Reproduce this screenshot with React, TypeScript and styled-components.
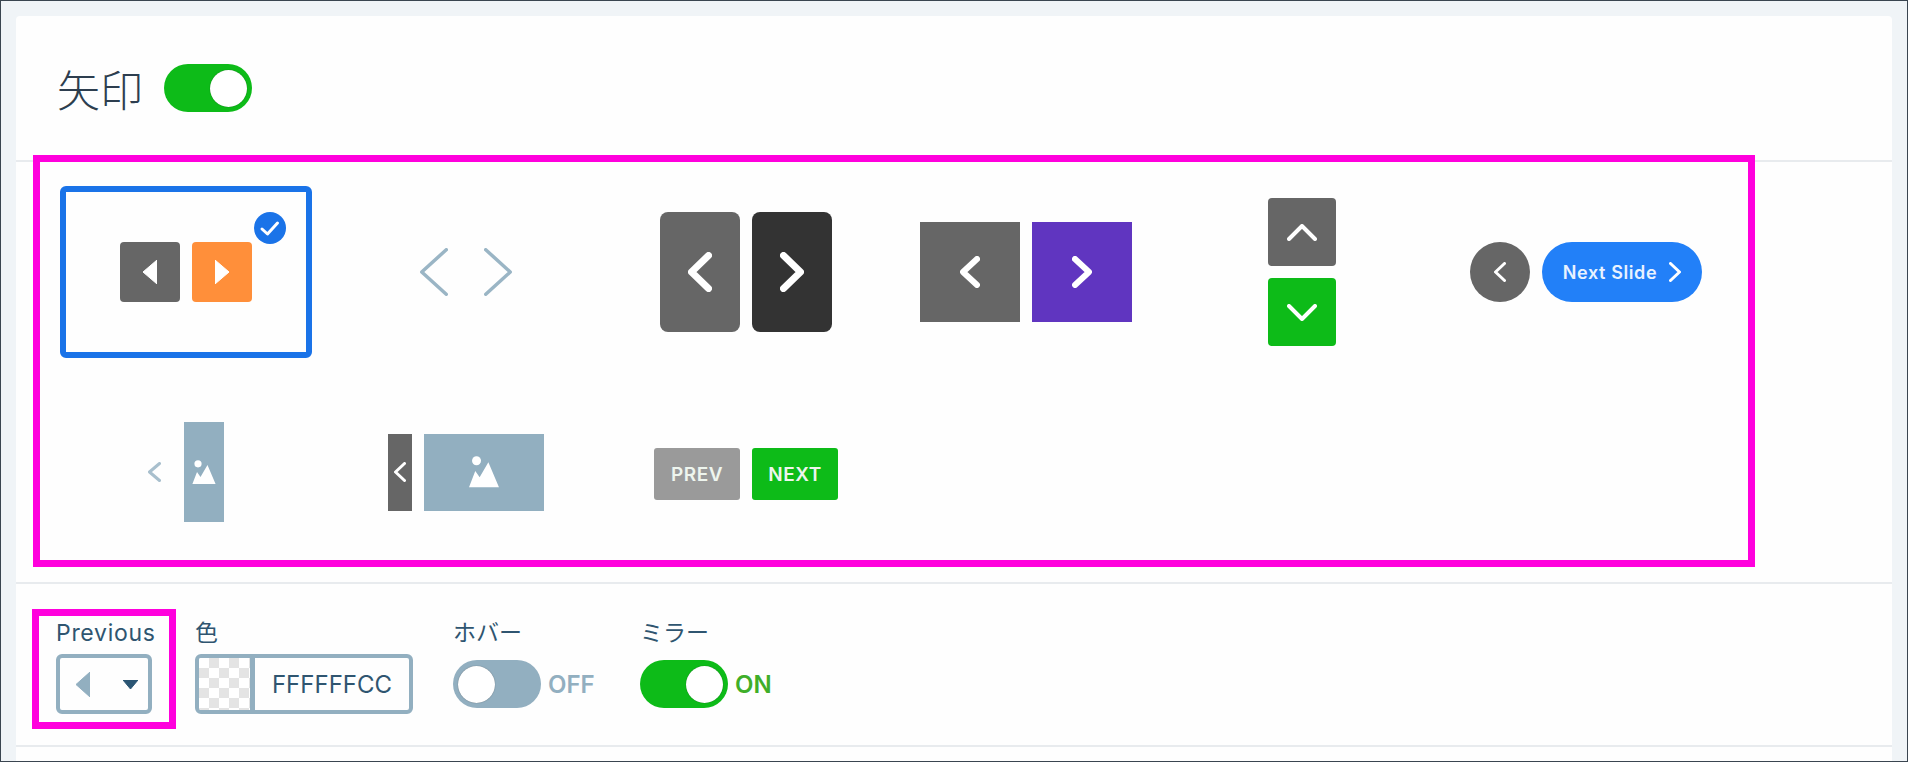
import React from "react";
import styled, { createGlobalStyle } from "styled-components";

const GlobalStyle = createGlobalStyle`
    html, body {
        margin: 0;
        padding: 0;
        background: #f0f4f7;
    }
    * {
        box-sizing: border-box;
    }
`;

const Chevron = ({ dir, w, h, s, color = "#fff" }: { dir: "left" | "right" | "up" | "down"; w: number; h: number; s: number; color?: string }) => {
    const i = s / 2;
    const points = {
        left: `${w - i},${i} ${i},${h / 2} ${w - i},${h - i}`,
        right: `${i},${i} ${w - i},${h / 2} ${i},${h - i}`,
        up: `${i},${h - i} ${w / 2},${i} ${w - i},${h - i}`,
        down: `${i},${i} ${w / 2},${h - i} ${w - i},${i}`,
    }[dir];
    return (
        <svg width={w} height={h} viewBox={`0 0 ${w} ${h}`}>
            <polyline points={points} fill="none" stroke={color} strokeWidth={s} strokeLinecap="round" strokeLinejoin="round" />
        </svg>
    );
};

const Triangle = ({ dir, w, h, color }: { dir: "left" | "right" | "down"; w: number; h: number; color: string }) => {
    const points = {
        left: `${w},0 0,${h / 2} ${w},${h}`,
        right: `0,0 ${w},${h / 2} 0,${h}`,
        down: `0,0 ${w},0 ${w / 2},${h}`,
    }[dir];
    return (
        <svg width={w} height={h} viewBox={`0 0 ${w} ${h}`}>
            <polygon points={points} fill={color} stroke={color} strokeWidth="1" strokeLinejoin="round" />
        </svg>
    );
};

const ImageIcon = ({ size }: { size: number }) => (
    <svg width={size} height={size * 1.04} viewBox="0 0 24 25">
        <circle cx="6" cy="3.8" r="3.6" fill="#fff" />
        <path d="M0 25 L5 12 L8.5 17 L15.5 5 L24 25 Z" fill="#fff" />
    </svg>
);

const App = () => {
    return (
        <>
            <GlobalStyle />
            <Pantalla>
                <Tarjeta>
                    <Cabecera>
                        <Titulo>矢印</Titulo>
                        <Interruptor $on>
                            <Perilla />
                        </Interruptor>
                    </Cabecera>

                    <SeccionFlechas>
                        <CuadroMarcado>
                            <Rejilla>
                                <Opcion $selected>
                                    <Par>
                                        <Boton $w={60} $h={60} $bg="#666666" $r={4}>
                                            <Triangle dir="left" w={14} h={24} color="#fff" />
                                        </Boton>
                                        <Boton $w={60} $h={60} $bg="#ff8f3a" $r={4}>
                                            <Triangle dir="right" w={14} h={24} color="#fff" />
                                        </Boton>
                                    </Par>
                                    <Marca>
                                        <svg width="32" height="32" viewBox="0 0 32 32">
                                            <circle cx="16" cy="16" r="16" fill="#1a73e8" />
                                            <polyline points="8,17 13.5,22 23.5,11" fill="none" stroke="#fff" strokeWidth="3" strokeLinecap="round" strokeLinejoin="round" />
                                        </svg>
                                    </Marca>
                                </Opcion>

                                <Opcion>
                                    <Par $gap={36}>
                                        <Chevron dir="left" w={28} h={48} s={3.5} color="#9ab5c5" />
                                        <Chevron dir="right" w={28} h={48} s={3.5} color="#9ab5c5" />
                                    </Par>
                                </Opcion>

                                <Opcion>
                                    <Par>
                                        <Boton $w={80} $h={120} $bg="#666666" $r={8}>
                                            <Chevron dir="left" w={24} h={40} s={7} />
                                        </Boton>
                                        <Boton $w={80} $h={120} $bg="#333333" $r={8}>
                                            <Chevron dir="right" w={24} h={40} s={7} />
                                        </Boton>
                                    </Par>
                                </Opcion>

                                <Opcion>
                                    <Par>
                                        <Boton $w={100} $h={100} $bg="#666666">
                                            <Chevron dir="left" w={20} h={32} s={6} />
                                        </Boton>
                                        <Boton $w={100} $h={100} $bg="#6035c0">
                                            <Chevron dir="right" w={20} h={32} s={6} />
                                        </Boton>
                                    </Par>
                                </Opcion>

                                <Opcion>
                                    <Pila>
                                        <Boton $w={68} $h={68} $bg="#666666" $r={4}>
                                            <Chevron dir="up" w={30} h={17} s={4} />
                                        </Boton>
                                        <Boton $w={68} $h={68} $bg="#0dbb18" $r={4}>
                                            <Chevron dir="down" w={30} h={17} s={4} />
                                        </Boton>
                                    </Pila>
                                </Opcion>

                                <Opcion>
                                    <Par>
                                        <Boton $w={60} $h={60} $bg="#666666" $r={30}>
                                            <Chevron dir="left" w={12} h={20} s={3} />
                                        </Boton>
                                        <Pildora>
                                            Next Slide
                                            <Chevron dir="right" w={12} h={20} s={3} />
                                        </Pildora>
                                    </Par>
                                </Opcion>

                                <Opcion>
                                    <Par $gap={23}>
                                        <Chevron dir="left" w={13} h={20} s={3} color="#a8bfcd" />
                                        <Boton $w={40} $h={100} $bg="#92afc0">
                                            <ImageIcon size={24} />
                                        </Boton>
                                    </Par>
                                </Opcion>

                                <Opcion>
                                    <Par>
                                        <Boton $w={24} $h={77} $bg="#666666">
                                            <Chevron dir="left" w={12} h={20} s={3} />
                                        </Boton>
                                        <Boton $w={120} $h={77} $bg="#92afc0">
                                            <ImageIcon size={30} />
                                        </Boton>
                                    </Par>
                                </Opcion>

                                <Opcion>
                                    <ParTexto>
                                        <BotonTexto $bg="#9a9a9a">PREV</BotonTexto>
                                        <BotonTexto $bg="#0dbb18">NEXT</BotonTexto>
                                    </ParTexto>
                                </Opcion>
                            </Rejilla>
                        </CuadroMarcado>
                    </SeccionFlechas>

                    <FilaAjustes>
                        <Campo $marked $width={144}>
                            <Etiqueta $spaced>Previous</Etiqueta>
                            <Linea>
                                <Selector>
                                    <Triangle dir="left" w={14} h={25} color="#92afc0" />
                                    <Triangle dir="down" w={15} h={9} color="#2a5573" />
                                </Selector>
                            </Linea>
                        </Campo>

                        <Campo>
                            <Etiqueta>色</Etiqueta>
                            <Linea>
                                <CampoColor>
                                    <Muestra />
                                    <ValorColor>FFFFFFCC</ValorColor>
                                </CampoColor>
                            </Linea>
                        </Campo>

                        <Campo $ml={21} $width={154}>
                            <Etiqueta>ホバー</Etiqueta>
                            <Linea>
                                <Interruptor>
                                    <Perilla />
                                </Interruptor>
                                <Estado>OFF</Estado>
                            </Linea>
                        </Campo>

                        <Campo $ml={14}>
                            <Etiqueta>ミラー</Etiqueta>
                            <Linea>
                                <Interruptor $on>
                                    <Perilla />
                                </Interruptor>
                                <Estado $on>ON</Estado>
                            </Linea>
                        </Campo>
                    </FilaAjustes>
                </Tarjeta>
            </Pantalla>
        </>
    );
};

export default App;

const Pantalla = styled.div`
    width: 1908px;
    height: 762px;
    padding: 15px 15px 0 15px;
    background: #f0f4f7;
    border: 1px solid #3a4550;
    overflow: hidden;
    font-family: Inter, "Noto Sans CJK JP", sans-serif;
`;

const Tarjeta = styled.div`
    background: #fefefe;
    border-radius: 4px 4px 0 0;
    height: 100%;
`;

const Cabecera = styled.div`
    display: flex;
    align-items: center;
    gap: 21px;
    height: 146px;
    padding-left: 41px;
    border-bottom: 2px solid #e8ebee;
`;

const Titulo = styled.h1`
    margin: 0;
    font-family: "Noto Sans CJK JP", sans-serif;
    font-size: 43px;
    font-weight: 300;
    line-height: 1;
    color: #2d3e4f;
`;

const Interruptor = styled.div<{ $on?: boolean }>`
    display: flex;
    align-items: center;
    justify-content: ${(p) => (p.$on ? "flex-end" : "flex-start")};
    width: 88px;
    height: 48px;
    padding: 0 5px;
    border-radius: 24px;
    background: ${(p) => (p.$on ? "#0dbb18" : "#92afc0")};
`;

const Perilla = styled.span`
    width: 37px;
    height: 37px;
    border-radius: 50%;
    background: #fff;
    box-shadow: 0 0 1px rgba(0, 0, 0, 0.5);
`;

const SeccionFlechas = styled.section`
    padding: 0 0 15px 17px;
    border-bottom: 2px solid #e8ebee;
`;

const CuadroMarcado = styled.div`
    position: relative;
    width: 1722px;
    height: 412px;
    margin-top: -7px;
    padding: 24px 0 0 20px;
    border: 7px solid #ff00dd;
`;

const Rejilla = styled.div`
    display: grid;
    grid-template-columns: repeat(6, 252px);
    grid-auto-rows: 172px;
    gap: 28px;
`;

const Opcion = styled.div<{ $selected?: boolean }>`
    position: relative;
    display: flex;
    align-items: center;
    justify-content: center;
    border: 6px solid ${(p) => (p.$selected ? "#1a73e8" : "transparent")};
    border-radius: 6px;
`;

const Par = styled.div<{ $gap?: number }>`
    display: flex;
    align-items: center;
    gap: ${(p) => p.$gap ?? 12}px;
`;

const ParTexto = styled(Par)`
    margin-top: 4px;
`;

const Pila = styled.div`
    display: flex;
    flex-direction: column;
    gap: 12px;
    margin-right: 8px;
`;

const Boton = styled.div<{ $w: number; $h: number; $bg: string; $r?: number }>`
    display: flex;
    align-items: center;
    justify-content: center;
    width: ${(p) => p.$w}px;
    height: ${(p) => p.$h}px;
    background: ${(p) => p.$bg};
    border-radius: ${(p) => p.$r ?? 0}px;
`;

const Marca = styled.span`
    position: absolute;
    top: 20px;
    right: 20px;
    display: flex;
`;

const Pildora = styled.div`
    display: flex;
    align-items: center;
    justify-content: center;
    gap: 12px;
    width: 160px;
    height: 60px;
    border-radius: 30px;
    background: #2280f8;
    color: #e8f2ff;
    font-size: 18px;
    font-weight: 600;
    letter-spacing: 0.6px;
    white-space: nowrap;
`;

const BotonTexto = styled.div<{ $bg: string }>`
    display: flex;
    align-items: center;
    justify-content: center;
    width: 86px;
    height: 52px;
    border-radius: 3px;
    background: ${(p) => p.$bg};
    color: #eef5ee;
    font-size: 19px;
    font-weight: 600;
    letter-spacing: 0.5px;
`;

const FilaAjustes = styled.div`
    display: flex;
    align-items: flex-start;
    gap: 19px;
    height: 163px;
    padding: 25px 0 0 16px;
    border-bottom: 2px solid #e8ebee;
`;

const Campo = styled.div<{ $marked?: boolean; $ml?: number; $width?: number }>`
    ${(p) => (p.$marked ? "border: 7px solid #ff00dd; padding: 0 17px 8px;" : "padding-top: 7px;")}
    ${(p) => (p.$ml ? `margin-left: ${p.$ml}px;` : "")}
    ${(p) => (p.$width ? `width: ${p.$width}px;` : "")}
`;

const Etiqueta = styled.div<{ $spaced?: boolean }>`
    height: 34px;
    margin-bottom: 4px;
    line-height: 34px;
    font-size: 23px;
    letter-spacing: ${(p) => (p.$spaced ? "0.7px" : "0")};
    color: #2f5570;
    white-space: nowrap;
`;

const Linea = styled.div`
    display: flex;
    align-items: center;
    gap: 7px;
    height: 60px;
`;

const Selector = styled.div`
    display: flex;
    align-items: center;
    justify-content: space-between;
    width: 96px;
    height: 60px;
    padding: 0 10px 0 16px;
    border: 4px solid #92afc0;
    border-radius: 6px;
`;

const CampoColor = styled.div`
    display: flex;
    width: 218px;
    height: 60px;
    border: 4px solid #92afc0;
    border-radius: 6px;
    overflow: hidden;
`;

const Muestra = styled.div`
    width: 56px;
    border-right: 5px solid #92afc0;
    background: repeating-conic-gradient(#ffffff 0 25%, #e4e4e4 0 50%) 10px 0 / 20px 20px;
`;

const ValorColor = styled.div`
    flex: 1;
    display: flex;
    align-items: center;
    justify-content: center;
    font-size: 24px;
    color: #2f5570;
`;

const Estado = styled.span<{ $on?: boolean }>`
    font-size: 24px;
    font-weight: 600;
    color: ${(p) => (p.$on ? "#3fae29" : "#92afc0")};
`;
